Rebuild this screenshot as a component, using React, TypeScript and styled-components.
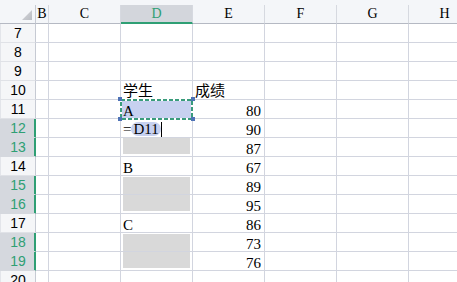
import React from "react";
import styled, { createGlobalStyle, css } from "styled-components";

const GREEN = "#2f9f74";
const GRID = "#d2d5df";
const COLS = "36px 13px repeat(6, 72px)";

const GlobalStyle = createGlobalStyle`
  html, body { margin: 0; padding: 0; background: #fff; overflow: hidden; }
  body { width: 457px; height: 282px; }
`;

const Sheet = styled.div`
  display: flex;
  flex-direction: column;
  width: 481px;
  height: 282px;
  overflow: hidden;
  font-family: "Liberation Serif", "Noto Sans CJK SC", serif;
  color: #000;
`;

const HeaderRow = styled.div`
  display: grid;
  grid-template-columns: ${COLS};
  padding-top: 5px;
  background: #f4f6f9;
`;

const HeaderCell = styled.div<{ $active?: boolean }>`
  box-sizing: border-box;
  height: 19px;
  border-right: 1px solid #d6d9e0;
  border-bottom: 1px solid #b5b9c3;
  display: flex;
  align-items: center;
  justify-content: center;
  font-size: 14px;
  line-height: 18px;
  ${(p) =>
    p.$active &&
    css`
      background: #d3d6dc;
      color: ${GREEN};
      border-bottom: 2px solid ${GREEN};
    `}
`;

const Corner = styled(HeaderCell)`
  justify-content: flex-end;
  align-items: flex-end;
  padding: 0 3px 3px 0;
  border-right-color: #c6cad3;
`;

const GridRow = styled.div`
  display: grid;
  grid-template-columns: ${COLS};
  height: 19px;
`;

const RowHead = styled.div<{ $active?: boolean }>`
  box-sizing: border-box;
  height: 19px;
  border-right: 1px solid #c6cad3;
  border-bottom: 1px solid #e0e2e7;
  background: #f5f6f8;
  box-shadow: inset 1px 0 0 #e3e5ea;
  display: flex;
  align-items: center;
  justify-content: center;
  padding-left: 1px;
  font-family: "Liberation Sans", sans-serif;
  font-size: 14px;
  line-height: 18px;
  ${(p) =>
    p.$active &&
    css`
      background: #d5d8de;
      color: ${GREEN};
      border-right-color: ${GREEN};
      border-bottom-color: #d5d8de;
      box-shadow: inset -1px 0 0 ${GREEN};
    `}
`;

const Cell = styled.div<{ $align?: "left" | "right"; $selected?: boolean }>`
  box-sizing: border-box;
  height: 19px;
  border-right: 1px solid ${GRID};
  border-bottom: 1px solid ${GRID};
  display: flex;
  align-items: flex-end;
  justify-content: ${(p) => (p.$align === "right" ? "flex-end" : "flex-start")};
  padding: 0 ${(p) => (p.$align === "right" ? "3px" : "2px")};
  font-size: 15px;
  line-height: 14px;
  white-space: nowrap;
  min-width: 0;
  ${(p) =>
    p.$selected &&
    css`
      position: relative;
      background: #c7d1f0;
    `}
`;

const CjkText = styled.span`
  font-family: "Noto Sans CJK SC", sans-serif;
  font-size: 15px;
  line-height: 18px;
  align-self: center;
`;

const FillCell = styled(Cell)`
  padding: 0;
  align-items: stretch;
`;

const Fill = styled.div<{ $top: number; $bottom: number }>`
  flex: 1;
  margin: ${(p) => `${p.$top}px 2px ${p.$bottom}px 2px`};
  background: #d9d9d9;
`;

const EditCell = styled(Cell)`
  align-items: center;
`;

const Eq = styled.span`
  line-height: 14px;
  margin-top: 1px;
`;

const RefPill = styled.span`
  display: inline-block;
  background: #c7d1f0;
  border-radius: 7px;
  padding: 0 2px;
  height: 14px;
  line-height: 14px;
  margin-top: 1px;
`;

const Caret = styled.span`
  display: inline-block;
  width: 1px;
  height: 15px;
  margin-top: 3px;
  background: #000;
`;

const Marquee = styled.svg`
  position: absolute;
  left: -3px;
  top: -3px;
  z-index: 5;
  overflow: visible;
  pointer-events: none;
`;

const Selection = () => (
  <Marquee width={77} height={24} viewBox="0 0 77 24">
    <rect x={3} y={3} width={71} height={19} fill="none" stroke="#ffffff" strokeWidth={2} />
    <rect
      x={3}
      y={3}
      width={71}
      height={19}
      fill="none"
      stroke="#3a9c7c"
      strokeWidth={2}
      strokeDasharray="4 2"
    />
    <rect x={0} y={0} width={4} height={4} fill="#4e72b6" />
    <rect x={73} y={0} width={4} height={4} fill="#4e72b6" />
    <rect x={0} y={20} width={4} height={4} fill="#4e72b6" />
    <rect x={73} y={20} width={4} height={4} fill="#4e72b6" />
  </Marquee>
);

const CornerTriangle = () => (
  <svg width={10} height={10} viewBox="0 0 10 10">
    <defs>
      <linearGradient id="tri" x1="0" y1="0" x2="1" y2="1">
        <stop offset="0" stopColor="#d6d8dc" />
        <stop offset="1" stopColor="#b9bcc2" />
      </linearGradient>
    </defs>
    <polygon points="10,0 10,10 0,10" fill="url(#tri)" />
  </svg>
);

type D =
  | { kind: "empty" }
  | { kind: "cjk"; text: string }
  | { kind: "text"; text: string }
  | { kind: "selected"; text: string }
  | { kind: "edit" }
  | { kind: "fill"; top: number; bottom: number };

type RowData = { n: number; active?: boolean; d: D; e?: string; eCjk?: boolean };

const rows: RowData[] = [
  { n: 7, d: { kind: "empty" } },
  { n: 8, d: { kind: "empty" } },
  { n: 9, d: { kind: "empty" } },
  { n: 10, d: { kind: "cjk", text: "学生" }, e: "成绩", eCjk: true },
  { n: 11, d: { kind: "selected", text: "A" }, e: "80" },
  { n: 12, active: true, d: { kind: "edit" }, e: "90" },
  { n: 13, active: true, d: { kind: "fill", top: 0, bottom: 2 }, e: "87" },
  { n: 14, d: { kind: "text", text: "B" }, e: "67" },
  { n: 15, active: true, d: { kind: "fill", top: 1, bottom: 0 }, e: "89" },
  { n: 16, active: true, d: { kind: "fill", top: 0, bottom: 2 }, e: "95" },
  { n: 17, d: { kind: "text", text: "C" }, e: "86" },
  { n: 18, active: true, d: { kind: "fill", top: 1, bottom: 0 }, e: "73" },
  { n: 19, active: true, d: { kind: "fill", top: 0, bottom: 2 }, e: "76" },
  { n: 20, d: { kind: "empty" } },
];

const DCell = ({ d }: { d: D }) => {
  switch (d.kind) {
    case "cjk":
      return (
        <Cell>
          <CjkText>{d.text}</CjkText>
        </Cell>
      );
    case "text":
      return <Cell>{d.text}</Cell>;
    case "selected":
      return (
        <Cell $selected>
          {d.text}
          <Selection />
        </Cell>
      );
    case "edit":
      return (
        <EditCell>
          <Eq>=</Eq>
          <RefPill>D11</RefPill>
          <Caret />
        </EditCell>
      );
    case "fill":
      return (
        <FillCell>
          <Fill $top={d.top} $bottom={d.bottom} />
        </FillCell>
      );
    default:
      return <Cell />;
  }
};

export default function App() {
  return (
    <>
      <GlobalStyle />
      <Sheet>
        <HeaderRow>
          <Corner>
            <CornerTriangle />
          </Corner>
          <HeaderCell>B</HeaderCell>
          <HeaderCell>C</HeaderCell>
          <HeaderCell $active>D</HeaderCell>
          <HeaderCell>E</HeaderCell>
          <HeaderCell>F</HeaderCell>
          <HeaderCell>G</HeaderCell>
          <HeaderCell>H</HeaderCell>
        </HeaderRow>
        {rows.map((r) => (
          <GridRow key={r.n}>
            <RowHead $active={r.active}>{r.n}</RowHead>
            <Cell />
            <Cell />
            <DCell d={r.d} />
            {r.eCjk ? (
              <Cell>
                <CjkText>{r.e}</CjkText>
              </Cell>
            ) : (
              <Cell $align="right">{r.e}</Cell>
            )}
            <Cell />
            <Cell />
            <Cell />
          </GridRow>
        ))}
      </Sheet>
    </>
  );
}
